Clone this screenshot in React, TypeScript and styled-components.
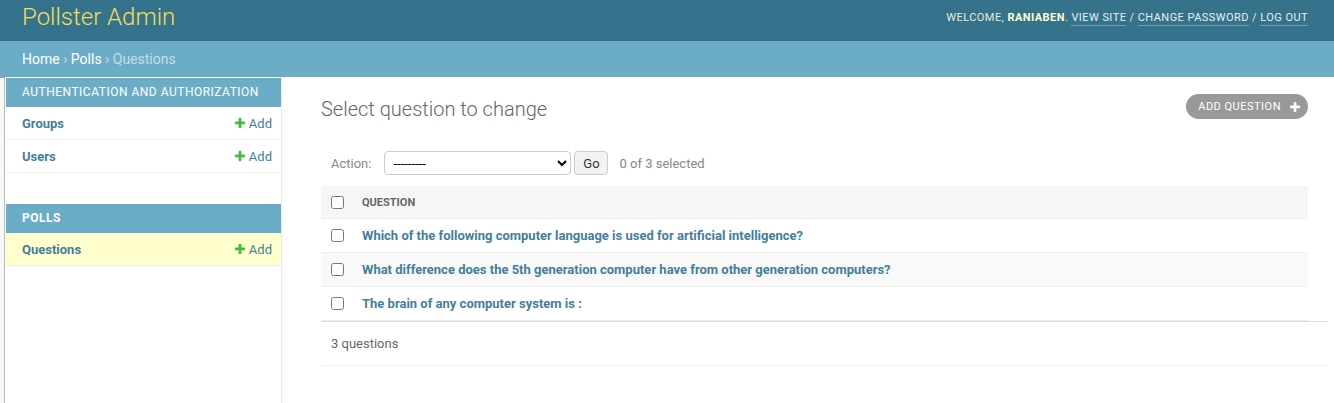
import React from 'react';
import styled, { createGlobalStyle } from 'styled-components';

const GlobalStyle = createGlobalStyle`
  html, body {
    margin: 0;
    padding: 0;
    background: #fff;
    font-family: Roboto, "Lucida Grande", "DejaVu Sans", Verdana, sans-serif;
    font-size: 14px;
    color: #333;
  }
  a { text-decoration: none; }
`;

const Header = styled.div`
  height: 41px;
  background: #34738b;
  display: flex;
  align-items: center;
  justify-content: space-between;
  padding: 0 26px 0 22px;
`;

const Branding = styled.h1`
  margin: 0;
  font-size: 24px;
  font-weight: 300;
  color: #f5dd5d;
  line-height: 1;
  margin-top: -7px;
`;

const UserTools = styled.div`
  font-size: 11px;
  letter-spacing: 0.45px;
  text-transform: uppercase;
  color: #e6ecd8;
  margin-top: -7px;

  strong {
    font-weight: 700;
    color: #ffc;
  }
`;

const ToolLink = styled.a`
  color: #e8f0f2;
  border-bottom: 1px solid rgba(255, 255, 255, 0.3);
  padding-bottom: 1px;
`;

const Breadcrumbs = styled.div`
  height: 36px;
  line-height: 36px;
  background: #6badc7;
  padding: 0 22px;
  font-size: 14px;
  color: #c4dce8;

  a {
    color: #fff;
  }
`;

const Main = styled.div`
  display: flex;
  min-height: calc(100vh - 77px);
`;

const Toggle = styled.div`
  width: 4px;
  background: #f8f8f8;
  border-right: 1px solid #bbb;
  border-top: 1px solid #999;
`;

const Sidebar = styled.nav`
  width: 275px;
  margin-left: 1px;
  border-right: 1px solid #eaeaea;
  padding-top: 1px;
`;

const Module = styled.div`
  margin-bottom: 31px;
`;

const Caption = styled.div<{ $bold?: boolean }>`
  height: 29px;
  line-height: 29px;
  background: #6badc7;
  color: #fff;
  font-size: 12px;
  font-weight: ${(p) => (p.$bold ? 700 : 400)};
  letter-spacing: 0.5px;
  text-transform: uppercase;
  padding-left: 16px;
`;

const ModelRow = styled.div<{ $current?: boolean }>`
  height: 32px;
  display: flex;
  align-items: center;
  justify-content: space-between;
  padding: 0 9px 0 16px;
  border-bottom: 1px solid #eee;
  background: ${(p) => (p.$current ? '#ffc' : '#fff')};
`;

const ModelLink = styled.a`
  font-size: 13px;
  font-weight: 700;
  color: #447e9b;
`;

const AddLink = styled.a`
  display: flex;
  align-items: center;
  gap: 4px;
  font-size: 13px;
  color: #447e9b;
`;

const Content = styled.div`
  flex: 1;
  padding: 20px 26px 0 39px;
`;

const TitleRow = styled.div`
  display: flex;
  justify-content: space-between;
  align-items: flex-start;
`;

const Title = styled.h1`
  margin: 0;
  font-size: 20px;
  font-weight: 300;
  color: #666;
  line-height: 24px;
`;

const AddButton = styled.a`
  display: flex;
  align-items: center;
  gap: 9px;
  height: 25px;
  margin-top: -3px;
  padding: 0 8px 0 12px;
  border-radius: 13px;
  background: #999;
  color: #fff;
  font-size: 11px;
  letter-spacing: 0.5px;
  text-transform: uppercase;
`;

const Actions = styled.div`
  display: flex;
  align-items: center;
  margin-top: 30px;
  padding: 0 10px;
  height: 24px;
  font-size: 13px;
  color: #888;
`;

const ActionLabel = styled.label`
  margin-right: 13px;
`;

const Select = styled.select`
  width: 187px;
  height: 24px;
  border: 1px solid #ccc;
  border-radius: 4px;
  background: #fff;
  font-family: Roboto, sans-serif;
  font-size: 13px;
  color: #000;
  padding: 0 4px;
`;

const GoButton = styled.button`
  margin-left: 3px;
  height: 24px;
  width: 34px;
  border: 1px solid #ccc;
  border-radius: 4px;
  background: #f2f2f2;
  font-family: Roboto, sans-serif;
  font-size: 13px;
  color: #333;
  padding: 0;
`;

const Counter = styled.span`
  margin-left: 11px;
`;

const Table = styled.table`
  width: 100%;
  margin-top: 11px;
  border-collapse: collapse;
`;

const Th = styled.th`
  height: 32px;
  background: #f6f6f6;
  border-bottom: 1px solid #eee;
  text-align: left;
  font-size: 11px;
  font-weight: 700;
  color: #666;
  text-transform: uppercase;
  padding: 0 10px 0 0;
`;

const CheckTh = styled(Th)`
  width: 31px;
  padding: 0 0 0 10px;
`;

const Row = styled.tr<{ $alt?: boolean }>`
  background: ${(p) => (p.$alt ? '#f9f9f9' : '#fff')};
`;

const Td = styled.td`
  height: 33px;
  border-bottom: 1px solid #eee;
  font-size: 13px;
  padding: 0;
  vertical-align: middle;
`;

const RowCheckCell = styled(Td)`
  width: 31px;
  padding-left: 10px;
`;

const QuestionLink = styled.a`
  font-weight: 700;
  color: #447e9b;
`;

const Checkbox = styled.input`
  margin: 0;
  width: 13px;
  height: 13px;
  display: block;
`;

const Paginator = styled.p`
  margin: 0 -20px 0 0;
  border-top: 1px solid #ddd;
  border-bottom: 1px solid #eee;
  height: 43px;
  line-height: 44px;
  padding: 0 10px;
  font-size: 13px;
  color: #666;
`;

const Plus = ({ color, size }: { color: string; size: number }) => (
  <svg width={size} height={size} viewBox="192 192 1408 1408">
    <path
      fill={color}
      d="M1600 796v192q0 40-28 68t-68 28h-416v416q0 40-28 68t-68 28h-192q-40 0-68-28t-28-68v-416h-416q-40 0-68-28t-28-68v-192q0-40 28-68t68-28h416v-416q0-40 28-68t68-28h192q40 0 68 28t28 68v416h416q40 0 68 28t28 68z"
    />
  </svg>
);

const questions = [
  'Which of the following computer language is used for artificial intelligence?',
  'What difference does the 5th generation computer have from other generation computers?',
  'The brain of any computer system is :',
];

export default function App() {
  return (
    <>
      <GlobalStyle />
      <Header>
        <Branding>Pollster Admin</Branding>
        <UserTools>
          Welcome, <strong>raniaben</strong>. <ToolLink href="#">View site</ToolLink> /{' '}
          <ToolLink href="#">Change password</ToolLink> / <ToolLink href="#">Log out</ToolLink>
        </UserTools>
      </Header>
      <Breadcrumbs>
        <a href="#">Home</a> › <a href="#">Polls</a> › Questions
      </Breadcrumbs>
      <Main>
        <Toggle />
        <Sidebar>
          <Module>
            <Caption>Authentication and Authorization</Caption>
            <ModelRow>
              <ModelLink href="#">Groups</ModelLink>
              <AddLink href="#">
                <Plus color="#3dbb3d" size={10} />
                Add
              </AddLink>
            </ModelRow>
            <ModelRow>
              <ModelLink href="#">Users</ModelLink>
              <AddLink href="#">
                <Plus color="#3dbb3d" size={10} />
                Add
              </AddLink>
            </ModelRow>
          </Module>
          <Module>
            <Caption $bold>Polls</Caption>
            <ModelRow $current>
              <ModelLink href="#">Questions</ModelLink>
              <AddLink href="#">
                <Plus color="#3dbb3d" size={10} />
                Add
              </AddLink>
            </ModelRow>
          </Module>
        </Sidebar>
        <Content>
          <TitleRow>
            <Title>Select question to change</Title>
            <AddButton href="#">
              Add question
              <Plus color="#fff" size={10} />
            </AddButton>
          </TitleRow>
          <Actions>
            <ActionLabel>Action:</ActionLabel>
            <Select defaultValue="">
              <option value="">---------</option>
              <option value="delete">Delete selected questions</option>
            </Select>
            <GoButton type="button">Go</GoButton>
            <Counter>0 of 3 selected</Counter>
          </Actions>
          <Table>
            <thead>
              <tr>
                <CheckTh>
                  <Checkbox type="checkbox" />
                </CheckTh>
                <Th>Question</Th>
              </tr>
            </thead>
            <tbody>
              {questions.map((q, i) => (
                <Row key={q} $alt={i % 2 === 1}>
                  <RowCheckCell>
                    <Checkbox type="checkbox" />
                  </RowCheckCell>
                  <Td>
                    <QuestionLink href="#">{q}</QuestionLink>
                  </Td>
                </Row>
              ))}
            </tbody>
          </Table>
          <Paginator>3 questions</Paginator>
        </Content>
      </Main>
    </>
  );
}
